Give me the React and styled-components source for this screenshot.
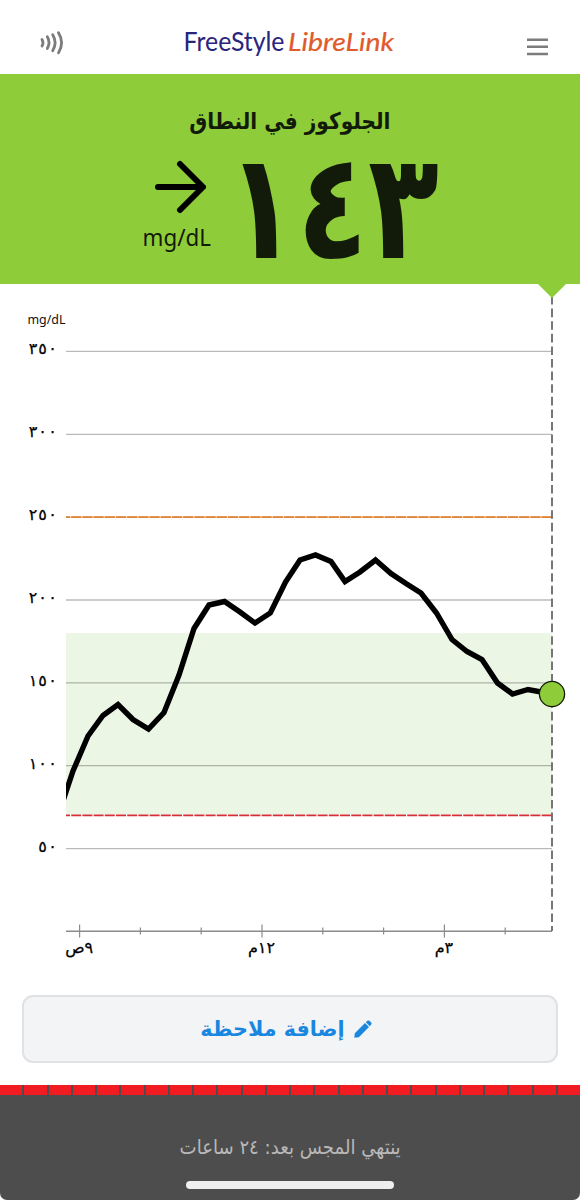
import React from 'react';
import styled, { createGlobalStyle } from 'styled-components';

const GlobalStyle = createGlobalStyle`
  body {
    margin: 0;
    background: #fff;
  }
`;

const Screen = styled.div`
  width: 580px;
  height: 1200px;
  display: flex;
  flex-direction: column;
  overflow: hidden;
  background: #fff;
  font-family: 'DejaVu Sans', 'Noto Sans', sans-serif;
`;

const Header = styled.header`
  height: 74px;
  flex-shrink: 0;
  box-sizing: border-box;
  padding: 26px 32px 0 38px;
  display: flex;
  justify-content: space-between;
  align-items: flex-start;
  svg {
    display: block;
  }
`;

const Logo = styled.svg`
  margin-right: 13px;
  overflow: visible;
  text {
    font-family: Lato, sans-serif;
  }
`;

const Banner = styled.section`
  position: relative;
  height: 210px;
  flex-shrink: 0;
  display: flex;
  flex-direction: column;
  align-items: center;
  background: #8fcc3a;
  color: #121a09;
`;

const Pointer = styled.div`
  position: absolute;
  top: 100%;
  right: 14px;
  border: 14px solid transparent;
  border-top-color: #8fcc3a;
  border-bottom: 0;
`;

const BannerTitle = styled.h1`
  margin: 29px 0 0;
  font-size: 23px;
  line-height: 36px;
  font-weight: bold;
  white-space: nowrap;
  transform: scaleX(0.875);
`;

const Reading = styled.div`
  width: 296px;
  height: 110px;
  margin-top: 15px;
  display: flex;
`;

const Trend = styled.div`
  width: 70px;
  flex-shrink: 0;
  display: flex;
  flex-direction: column;
  align-items: center;
  svg {
    margin-top: 6px;
    margin-left: 5px;
  }
  span {
    font: 24px/30px 'Noto Sans', sans-serif;
    margin-top: 8px;
    transform: scaleX(0.93);
  }
`;

const Value = styled.div`
  flex: none;
  width: 241px;
  display: flex;
  justify-content: center;
  font-size: 148px;
  line-height: 106px;
  font-weight: bold;
  white-space: nowrap;
  transform: scaleX(0.785);
`;

const Chart = styled.svg`
  display: block;
  height: 711px;
  flex-shrink: 0;
`;

const AxisLabel = styled.text`
  font-family: 'DejaVu Sans', sans-serif;
  font-size: 16px;
  text-anchor: middle;
  fill: #000;
  stroke: #000;
  stroke-width: 0.25px;
`;

const UnitLabel = styled.text`
  font-family: 'Noto Sans', sans-serif;
  font-size: 13px;
  fill: #111;
`;

const NoteButton = styled.button`
  height: 68px;
  margin: 0 22px;
  padding: 0 8px 0 0;
  box-sizing: border-box;
  flex-shrink: 0;
  display: flex;
  align-items: center;
  justify-content: center;
  gap: 9px;
  border: 2px solid #dfe1e4;
  border-radius: 11px;
  background: #f2f4f6;
  color: #1987e0;
  font: bold 20.7px 'DejaVu Sans', sans-serif;
`;

const Footer = styled.footer`
  height: 115px;
  margin-top: 22px;
  flex-shrink: 0;
  display: flex;
  flex-direction: column;
  align-items: center;
  border-radius: 0 0 7px 7px;
  background: #4d4d4d;
`;

const SensorBar = styled.div`
  width: 100%;
  height: 10px;
  display: grid;
  grid-template-columns: repeat(24, 1fr);
  column-gap: 2px;
`;

const Segment = styled.div`
  background: #f11c22;
`;

const SensorText = styled.div`
  height: 86px;
  line-height: 105px;
  font-size: 20px;
  color: #b9b9b9;
  white-space: nowrap;
  transform: scaleX(0.905);
`;

const HomeIndicator = styled.div`
  width: 208px;
  height: 8px;
  border-radius: 4px;
  background: #f0eff0;
`;

const LEFT = 66;
const RIGHT = 552;
const levels = [
  [350, '٣٥٠'],
  [300, '٣٠٠'],
  [250, '٢٥٠'],
  [200, '٢٠٠'],
  [150, '١٥٠'],
  [100, '١٠٠'],
  [50, '٥٠'],
];
const hours = ['٩ص', '', '', '١٢م', '', '', '٣م', ''];
const trace =
  '62,520 66,508 73,487 88,452 103,431.5 118,420.5 133,435.5 148.5,445 164,428.5 179,391 194,344.5 209,321 224.5,317.5 240,328 255,339 270.3,329 285.5,298 300,276 315.5,271 331,277.5 345,297.5 360,288 375.5,276 391,289.5 406,299.5 421,309 436.5,329 452,355.5 467,367.5 482,375.5 497.5,399 512.5,410 528,405.5 552,410';

const y = value => 647.4 - value * 1.657;

// one x per digit, so hundreds, tens and units stay in columns
const digitColumns = label => [33, 42.5, 52.5].slice(-label.length).join(' ');

const GlucoseChart = () => (
  <Chart width="580" height="711" viewBox="0 0 580 711">
    <clipPath id="plot">
      <rect x={LEFT} y="0" width="500" height="660" />
    </clipPath>
    <rect x={LEFT} y={y(180)} width={RIGHT - LEFT} height={y(70) - y(180)} fill="#ecf6e5" />
    <UnitLabel x="27.5" y="40" textLength="38" lengthAdjust="spacingAndGlyphs">
      mg/dL
    </UnitLabel>
    {levels.map(([value, label]) => (
      <g key={value}>
        {value !== 250 && (
          <path d={`M${LEFT} ${y(value)}H${RIGHT}`} stroke="#000" strokeOpacity="0.27" strokeWidth="1.3" />
        )}
        <AxisLabel x={digitColumns(label)} y={y(value) + 3}>
          {label}
        </AxisLabel>
      </g>
    ))}
    <path d={`M${LEFT} ${y(250)}H${RIGHT}`} stroke="#f6c9a0" strokeWidth="1.6" />
    <path d={`M${LEFT} ${y(250)}H${RIGHT}`} stroke="#de8236" strokeWidth="1.6" strokeDasharray="10 1.2" strokeDashoffset="6" />
    <path d={`M${LEFT} ${y(70)}H${RIGHT}`} stroke="#fff" strokeWidth="1.6" />
    <path d={`M${LEFT} ${y(70)}H${RIGHT}`} stroke="#d62f37" strokeWidth="1.6" strokeDasharray="10 1.2" strokeDashoffset="6" />
    <path d={`M${LEFT} 647.2H${RIGHT}`} stroke="#8b8b8b" strokeWidth="1.4" />
    {hours.map((label, i) => {
      const x = 79.6 + i * 60.8;
      const half = i % 3 === 0 ? 6.5 : 3.5;
      return (
        <g key={i}>
          <path d={`M${x} ${647 - half}V${647 + half}`} stroke="#8b8b8b" strokeWidth="1.2" />
          {label && (
            <AxisLabel x={x - 0.5} y="669" direction="rtl">
              {label}
            </AxisLabel>
          )}
        </g>
      );
    })}
    <path d={`M${RIGHT} 12V647`} stroke="#67686c" strokeWidth="1.8" strokeDasharray="8.6 4" />
    <polyline points={trace} clipPath="url(#plot)" fill="none" stroke="#000" strokeWidth="5.4" />
    <circle cx={RIGHT} cy="410" r="12.6" fill="#8fcc3a" stroke="#111c08" strokeWidth="1.3" />
  </Chart>
);

const App = () => (
  <>
    <GlobalStyle />
    <Screen>
      <Header>
        <svg width="28" height="32" viewBox="38 26 28 32" fill="none" stroke="#7c7c7c" strokeWidth="2.8" strokeLinecap="round">
          <path d="M42 39.4Q44 42.6 42 46" />
          <path d="M47.3 36.8Q50.7 42.6 47.3 48.5" />
          <path d="M52.7 34.7Q57.5 42.6 52.7 50.7" />
          <path d="M58.5 32.7Q64.7 42.6 58.5 52.9" />
        </svg>
        <Logo width="220" height="36" viewBox="180 26 220 36">
          <text x="183.5" y="51" fontSize="26.5" fill="#29257c" textLength="101" lengthAdjust="spacingAndGlyphs">
            FreeStyle
          </text>
          <text
            x="288"
            y="51"
            fontSize="25.5"
            fill="#e05a2b"
            stroke="#e05a2b"
            strokeWidth="0.2"
            fontStyle="italic"
            textLength="106"
            lengthAdjust="spacingAndGlyphs"
          >
            LibreLink
          </text>
        </Logo>
        <svg width="21" height="32" viewBox="527 26 21 32" stroke="#7c7c7c" strokeWidth="2.6">
          <path d="M527 39.7h21M527 46.8h21M527 54h21" />
        </svg>
      </Header>
      <Banner>
        <BannerTitle dir="rtl">الجلوكوز في النطاق</BannerTitle>
        <Reading>
          <Trend>
            <svg width="52" height="54" viewBox="154 160 52 54" fill="none" stroke="#000" strokeWidth="6" strokeLinecap="round" strokeLinejoin="round">
              <path d="M158 187H202M180 164L203 187L180 210" />
            </svg>
            <span>mg/dL</span>
          </Trend>
          <Value>١٤٣</Value>
        </Reading>
        <Pointer />
      </Banner>
      <GlucoseChart />
      <NoteButton dir="rtl">
        <svg width="18" height="18" viewBox="0 0 18 18" fill="currentColor">
          <path d="M0.3 17.7L0.8 13.2L11 3L15 7L4.8 17.2ZM11.8 2.2L13.4 0.8Q14.4 0 15.4 0.8L17.2 2.6Q18 3.6 17.2 4.6L15.8 6.2Z" />
        </svg>
        <span>إضافة ملاحظة</span>
      </NoteButton>
      <Footer>
        <SensorBar>
          {Array.from({ length: 24 }, (_, i) => (
            <Segment key={i} />
          ))}
        </SensorBar>
        <SensorText dir="rtl">ينتهي المجس بعد: ٢٤ ساعات</SensorText>
        <HomeIndicator />
      </Footer>
    </Screen>
  </>
);

export default App;
